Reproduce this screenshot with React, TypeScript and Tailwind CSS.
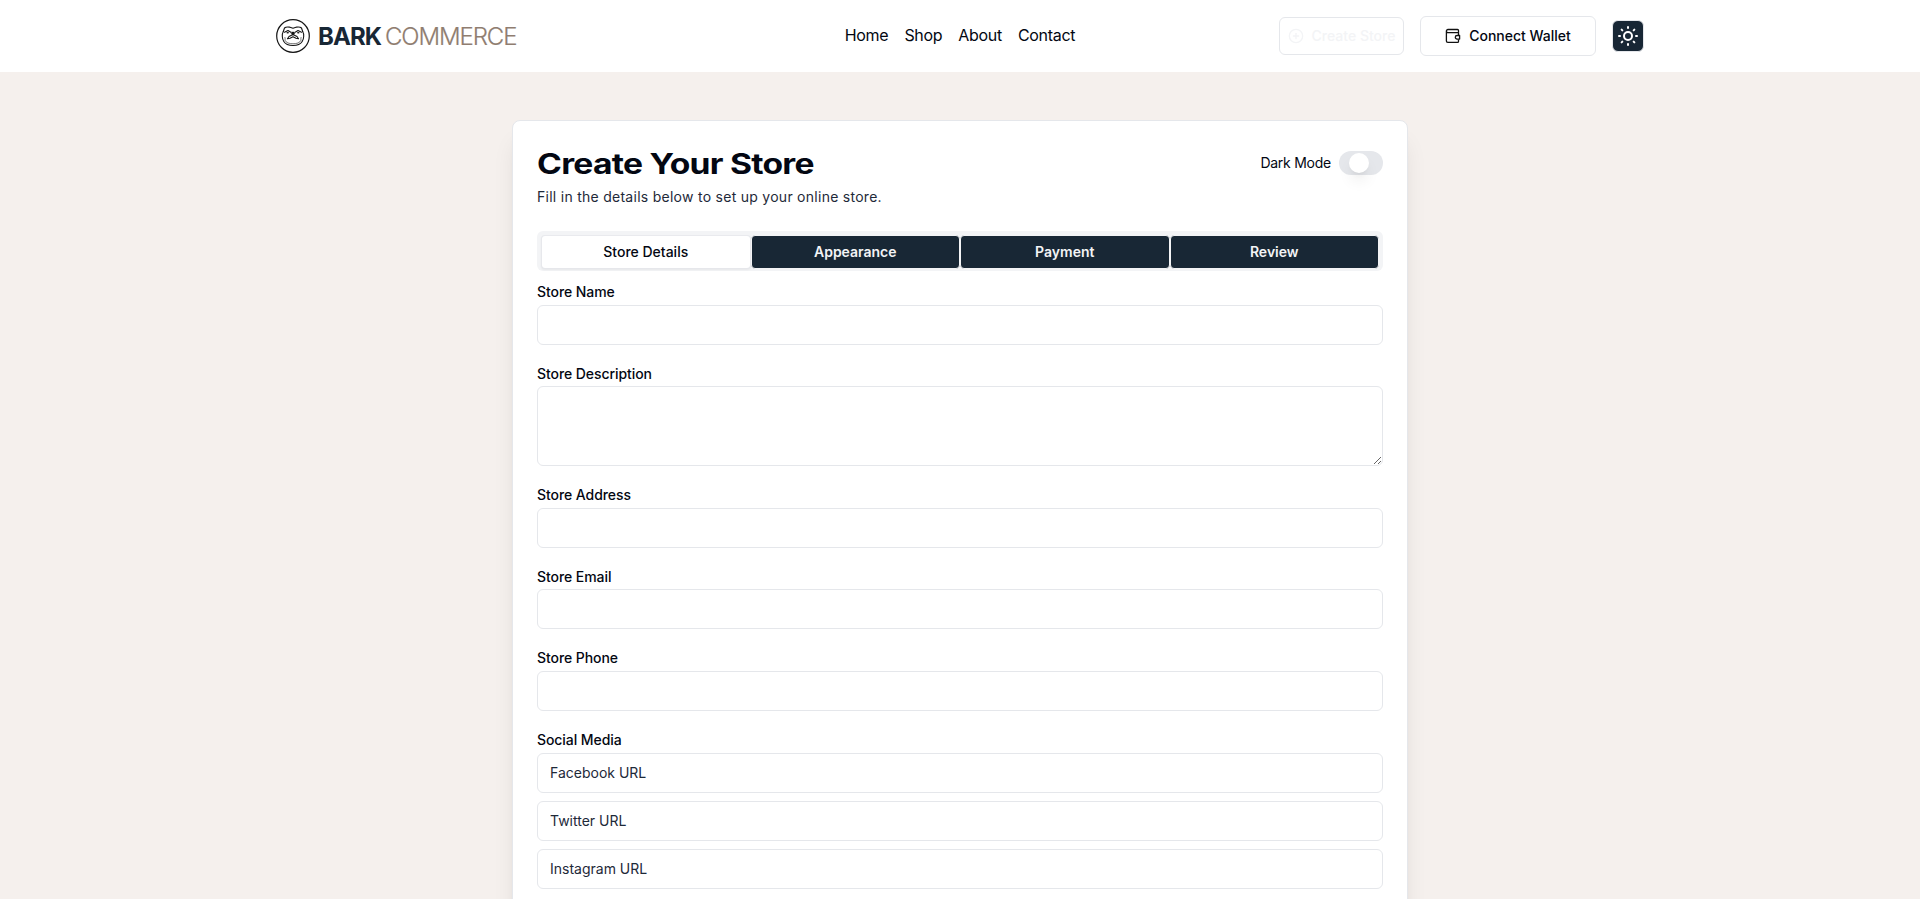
import React from 'react';
import { PlusCircle, SunMedium } from 'lucide-react';

function Logo() {
  return (
    <svg width="34" height="34" viewBox="0 0 34 34" fill="none" stroke="#151515" strokeLinecap="round" strokeLinejoin="round">
      <circle cx="17" cy="17" r="16.300" strokeWidth="1.2" />
      <g strokeWidth="1.1">
        <path d="M7.300 12.500 8.500 9C10 7.600 12 8 14 8.200L17 9.200 20 8.200C22 8 24 7.600 25.500 9L26.700 12.500" />
        <path d="M7.300 12.500C5.800 15 6 20 7.800 22.500 9.500 25.300 13 26.500 17 26.500 21 26.500 24.500 25.300 26.200 22.500 28 20 28.200 15 26.700 12.500" />
        <path d="M8.500 13.200 12 11.500 14.800 13.200M25.500 13.200 22 11.500 19.200 13.200" />
        <path d="M11.500 19.800 13 17.500 17 15.500 21 17.500 22.500 19.800 20 19.300 17 17.800 14 19.300Z" />
      </g>
      <path d="M9 18.500C9.500 20 8.500 21.500 9.800 22.500L12 24C15 25 19 25 22 24L24.200 22.500C25.500 21.500 24.500 20 25 18.500" strokeWidth=".6" />
      <path d="M15.700 13h2.600l.4 1.700-1.700 1.600-1.700-1.600Z" fill="#151515" strokeWidth=".4" />
      <ellipse cx="11.700" cy="13.700" rx="1.300" ry=".8" fill="#151515" stroke="none" />
      <ellipse cx="22.300" cy="13.700" rx="1.300" ry=".8" fill="#151515" stroke="none" />
    </svg>
  );
}

function WalletIcon() {
  return (
    <svg width="16" height="16" viewBox="0 0 16 16" fill="none" stroke="#111111" strokeWidth="1.3" strokeLinejoin="round">
      <path d="M13.500 4.700V2.500a1 1 0 0 0-1-1H3A1.600 1.600 0 0 0 3 4.700h10.500v2.800M1.400 3v10a1.400 1.400 0 0 0 1.400 1.400h9.700a1 1 0 0 0 1-1v-2" />
      <path d="M14.600 7.500h-2.500a1.800 1.800 0 0 0 0 3.600h2.500Z" />
    </svg>
  );
}

function Field({ label, children }: { label: string; children: React.ReactNode }) {
  return (
    <div>
      <div className="h-[25.6px] text-sm leading-[25.6px] font-medium tracking-[-0.07px]">{label}</div>
      {children}
    </div>
  );
}

const inputClass =
  'block h-10 w-full rounded-md border border-gray-200 bg-white px-3 text-sm placeholder:text-gray-800 outline-none';

export default function App() {
  return (
    <div className="flex h-[899px] flex-col overflow-hidden bg-[#f5f0ed] font-['Inter',sans-serif] text-[#030712]">
      <header className="h-[72px] shrink-0 bg-white">
        <div className="mx-auto grid h-full w-[1368px] grid-cols-[1fr_auto_1fr] items-center">
          <div className="flex items-center">
            <Logo />
            <div className="ml-2 flex items-baseline gap-1 pt-0.5 text-2xl leading-8">
              <span className="w-[63px] font-bold tracking-[-0.9px] text-[#182735]">BARK</span>
              <span className="font-light tracking-[-1.1px] text-[#8f7d70] [-webkit-text-stroke:0.2px_#8f7d70]">COMMERCE</span>
            </div>
          </div>
          <nav className="flex gap-4 pb-0.5 text-base tracking-[-0.3px]">
            <a>Home</a>
            <a>Shop</a>
            <a>About</a>
            <a>Contact</a>
          </nav>
          <div className="flex items-center justify-end gap-4">
            <button className="flex h-[38px] w-[125px] items-center justify-center gap-2 rounded-md border border-gray-200 text-sm font-medium text-gray-100">
              <PlusCircle size={16} />
              Create Store
            </button>
            <button className="flex h-10 w-44 items-center justify-center gap-2 rounded-md border border-gray-200 text-sm font-medium">
              <WalletIcon />
              Connect Wallet
            </button>
            <button className="flex size-8 items-center justify-center rounded-md border border-gray-200 bg-[#182735] text-white">
              <SunMedium size={24} />
            </button>
          </div>
        </div>
      </header>

      <main className="mx-auto mt-12 w-4xl shrink-0 rounded-lg border border-gray-200 bg-white p-6 shadow-xl">
        <div className="flex h-9 items-center justify-between">
          <h1 className="origin-left scale-x-[1.2] pt-px text-[28px] leading-9 font-bold tracking-[-0.6px] whitespace-nowrap">
            Create Your Store
          </h1>
          <div className="flex items-center gap-2 text-sm">
            <span className="tracking-[-0.25px]">Dark Mode</span>
            <span className="flex h-6 w-11 items-center justify-center rounded-full bg-gray-200">
              <span className="mr-1 size-5 rounded-full bg-white shadow-lg" />
            </span>
          </div>
        </div>
        <p className="mt-1.5 text-sm leading-5 tracking-[0.27px] text-gray-800">Fill in the details below to set up your online store.</p>

        <div className="mt-6 grid h-10 grid-cols-4 rounded-md bg-gray-100 p-1 text-center text-sm leading-8 font-medium">
          <div className="h-[34px] rounded-sm border border-gray-200/70 bg-white bg-clip-padding shadow-xs">Store Details</div>
          {['Appearance', 'Payment', 'Review'].map((tab) => (
            <div key={tab} className="h-[34px] rounded-sm border border-gray-100 bg-[#182735] font-semibold text-gray-100">
              {tab}
            </div>
          ))}
        </div>

        <form className="mt-2 flex flex-col gap-4">
          <Field label="Store Name">
            <input className={inputClass} />
          </Field>
          <Field label="Store Description">
            <textarea className="block h-20 w-full resize-y rounded-md border border-gray-200 bg-white px-3 py-2 text-sm outline-none" />
          </Field>
          <Field label="Store Address">
            <input className={inputClass} />
          </Field>
          <Field label="Store Email">
            <input className={inputClass} />
          </Field>
          <Field label="Store Phone">
            <input className={inputClass} />
          </Field>
          <Field label="Social Media">
            <div className="flex flex-col gap-2 pb-12">
              <input className={inputClass} placeholder="Facebook URL" />
              <input className={inputClass} placeholder="Twitter URL" />
              <input className={inputClass} placeholder="Instagram URL" />
            </div>
          </Field>
        </form>
      </main>
    </div>
  );
}
